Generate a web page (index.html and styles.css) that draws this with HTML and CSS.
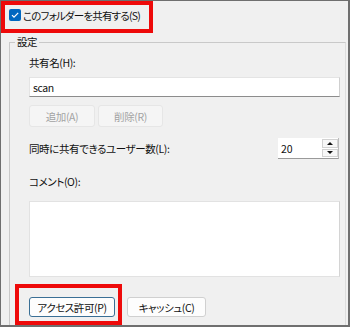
FILE: index.html
```html
<!DOCTYPE html>
<html lang="ja">
<head>
    <meta charset="UTF-8">
    <title>詳細な共有</title>
    <link rel="stylesheet" href="styles.css">
</head>
<body>
    <div class="dialog">
        <!-- 共有チェック -->
        <label class="mark share-check">
            <span class="checkbox">
                <svg width="12" height="12" viewBox="0 0 12 12"><rect width="12" height="12" rx="2" fill="#0067c0"/><path d="M3 6.2 L5 8.2 L9.2 3.8" fill="none" stroke="#fff" stroke-width="1.2"/></svg>
            </span>
            <span class="share-text">このフォルダーを共有する(S)</span>
        </label>

        <fieldset class="settings">
            <legend>設定</legend>
            <div class="settings-body">
                <div class="field-label">共有名(H):</div>
                <input class="text-input" type="text" value="scan">

                <div class="btn-row">
                    <button class="btn btn-add" disabled>追加(A)</button>
                    <button class="btn btn-del" disabled>削除(R)</button>
                </div>

                <div class="limit-row">
                    <span>同時に共有できるユーザー数(L):</span>
                    <div class="spin">
                        <input class="spin-input" type="text" value="20">
                        <div class="spin-btns">
                            <span class="spin-up"></span>
                            <span class="spin-down"></span>
                        </div>
                    </div>
                </div>

                <div class="field-label comment-label">コメント(O):</div>
                <textarea class="comment"></textarea>

                <div class="action-row">
                    <div class="mark mark-access">
                        <button class="btn btn-default btn-access">アクセス許可(P)</button>
                    </div>
                    <button class="btn btn-cache">キャッシュ(C)</button>
                </div>
            </div>
        </fieldset>
    </div>
</body>
</html>
```

FILE: styles.css
```css
* {
    box-sizing: border-box;
    margin: 0;
}

body {
    width: 350px;
    height: 327px;
    overflow: hidden;
    font-family: "Noto Sans CJK JP", "Noto Sans", sans-serif;
    font-size: 10.5px;
    font-feature-settings: "palt";
    letter-spacing: -0.4px;
    color: #111;
}

.dialog {
    width: 350px;
    height: 327px;
    background-color: #f0f0f0;
    border: 1px solid #6f6f6f;
    border-right-width: 2px;
    border-bottom-width: 2px;
    overflow: hidden;
}

.mark {
    border: 4px solid #ee0a0a;
}

.share-check {
    display: flex;
    align-items: center;
    gap: 2px;
    width: 152px;
    height: 32px;
    padding: 0 0 4px 4px;
    white-space: nowrap;
}

.share-text {
    letter-spacing: -0.8px;
}

.checkbox {
    display: flex;
    width: 12px;
    height: 12px;
}

.settings {
    margin: 2px 0 0 8px;
    width: 337px;
    height: 400px;
    border: 1px solid #c9c9c9;
    border-right-color: #dddddd;
    padding: 0 5px;
}

.settings legend {
    padding: 0 2px;
    line-height: 14px;
}

.settings-body {
    padding: 7px 0 0 14px;
}

.field-label {
    line-height: 14px;
}

.text-input {
    display: block;
    width: 100%;
    height: 20px;
    margin-top: 7px;
    padding: 0 3px;
    font: inherit;
    letter-spacing: inherit;
    color: inherit;
    background-color: #fff;
    border: 1px solid #e4e4e4;
    border-right-color: #cfcfcf;
    border-bottom-color: #8c8c8c;
    outline: none;
}

.btn {
    height: 20px;
    font: inherit;
    letter-spacing: inherit;
    color: #111;
    background-color: #fdfdfd;
    border: 1px solid #d0d0d0;
    border-radius: 3px;
    padding: 0;
}

.btn:disabled {
    color: #a3a3a3;
    background-color: #f5f5f5;
    border-color: #e6e6e6;
}

.btn-row {
    display: flex;
    gap: 3px;
    margin-top: 8px;
}

.btn-add {
    width: 66px;
    height: 22px;
}

.btn-del {
    width: 65px;
    height: 22px;
}

.limit-row {
    display: flex;
    justify-content: space-between;
    align-items: center;
    margin-top: 11px;
    height: 21px;
}

.spin {
    display: flex;
    width: 61px;
    height: 21px;
    margin-right: 1px;
    background-color: #fff;
    border-right: 1px solid #bcbcbc;
    border-bottom: 1px solid #9a9a9a;
}

.spin-input {
    width: 44px;
    border: 0;
    padding: 0 3px;
    font: inherit;
    color: inherit;
    background: transparent;
    outline: none;
}

.spin-btns {
    display: flex;
    flex-direction: column;
    gap: 1px;
    width: 16px;
    padding: 1px 0;
}

.spin-up,
.spin-down {
    flex: 1;
    display: flex;
    align-items: center;
    justify-content: center;
    background-color: #f7f7f7;
    border: 1px solid #d2d2d2;
}

.spin-up::before {
    content: "";
    border-left: 3px solid transparent;
    border-right: 3px solid transparent;
    border-bottom: 3px solid #111;
}

.spin-down::before {
    content: "";
    border-left: 3px solid transparent;
    border-right: 3px solid transparent;
    border-top: 3px solid #111;
}

.comment-label {
    margin-top: 16px;
}

.comment {
    display: block;
    width: 100%;
    height: 76px;
    margin-top: 12px;
    resize: none;
    background-color: #fff;
    border: 1px solid #e2e2e2;
    border-right-color: #d4d4d4;
    outline: none;
}

.action-row {
    display: flex;
    align-items: flex-start;
    gap: 5px;
    margin-top: 7px;
}

.mark-access {
    margin-left: -14px;
    height: 41px;
    padding: 9px 3px 0 10px;
}

.btn-access {
    width: 86px;
}

.btn-default {
    border-color: #3a6f95;
}

.btn-cache {
    width: 79px;
    margin-top: 13px;
}
```
